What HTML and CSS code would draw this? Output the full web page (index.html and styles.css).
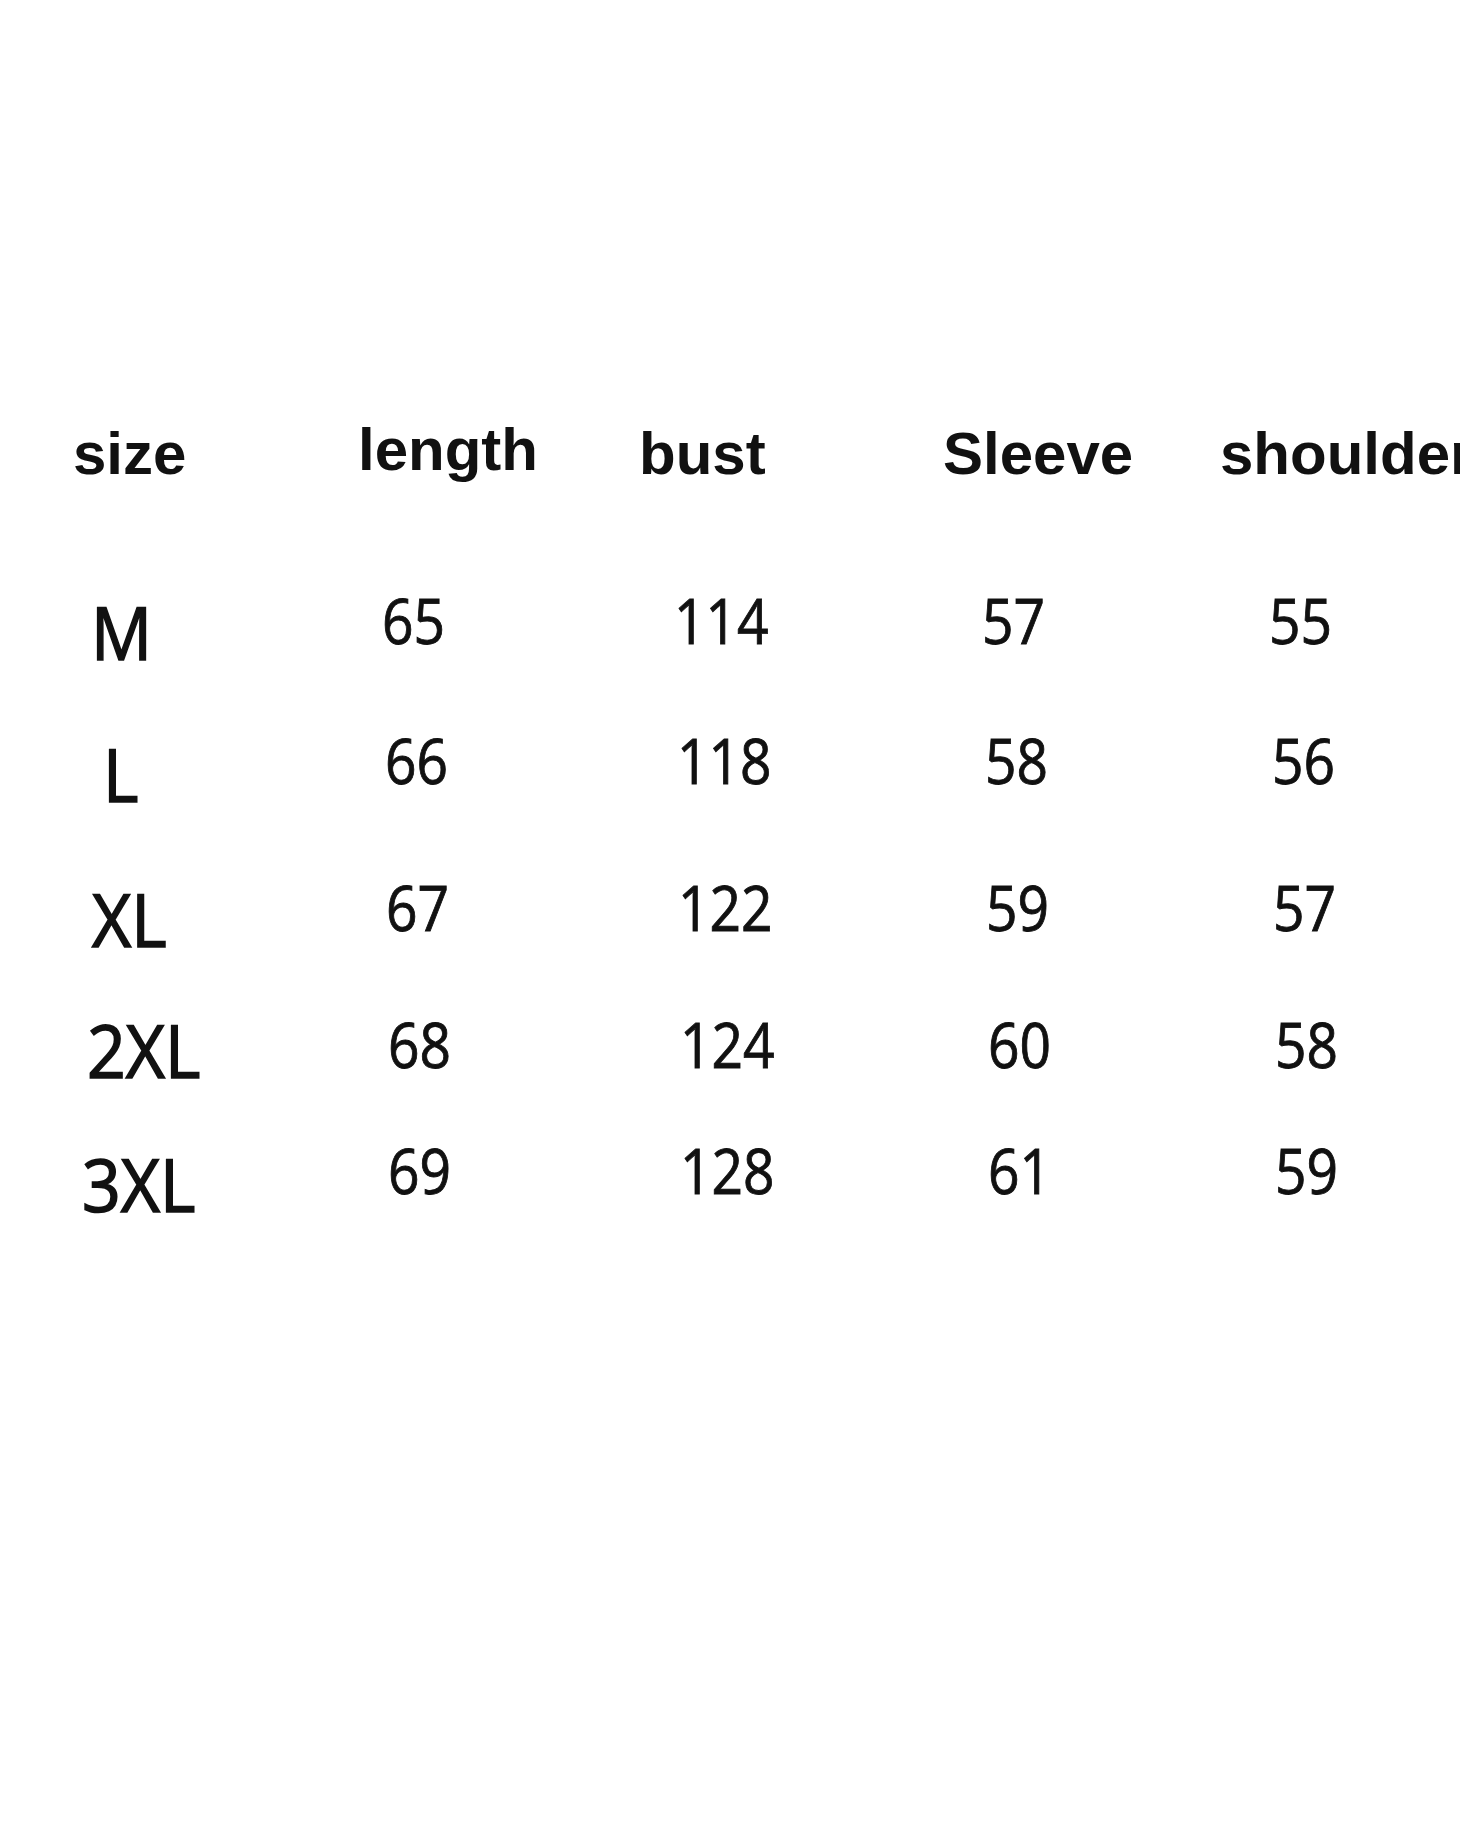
FILE: index.html
```html
<!DOCTYPE html>
<html lang="en">
<head>
<meta charset="utf-8">
<title>Size chart</title>
<link rel="stylesheet" href="styles.css">
</head>
<body>
<div class="chart">
  <div class="row head">
    <div class="cell c-size">size</div>
    <div class="cell c-length">length</div>
    <div class="cell c-bust">bust</div>
    <div class="cell c-sleeve">Sleeve</div>
    <div class="cell c-shoulder">shoulder</div>
  </div>
  <div class="row data r1">
    <div class="cell label"><span>M</span></div>
    <div class="cell num"><span>65</span></div>
    <div class="cell num"><span>114</span></div>
    <div class="cell num"><span>57</span></div>
    <div class="cell num"><span>55</span></div>
  </div>
  <div class="row data r2">
    <div class="cell label"><span>L</span></div>
    <div class="cell num"><span>66</span></div>
    <div class="cell num"><span>118</span></div>
    <div class="cell num"><span>58</span></div>
    <div class="cell num"><span>56</span></div>
  </div>
  <div class="row data r3">
    <div class="cell label"><span>XL</span></div>
    <div class="cell num"><span>67</span></div>
    <div class="cell num"><span>122</span></div>
    <div class="cell num"><span>59</span></div>
    <div class="cell num"><span>57</span></div>
  </div>
  <div class="row data r4">
    <div class="cell label"><span>2XL</span></div>
    <div class="cell num"><span>68</span></div>
    <div class="cell num"><span>124</span></div>
    <div class="cell num"><span>60</span></div>
    <div class="cell num"><span>58</span></div>
  </div>
  <div class="row data r5">
    <div class="cell label"><span>3XL</span></div>
    <div class="cell num"><span>69</span></div>
    <div class="cell num"><span>128</span></div>
    <div class="cell num"><span>61</span></div>
    <div class="cell num"><span>59</span></div>
  </div>
</div>
</body>
</html>
```
FILE: styles.css
```css
html, body {
  margin: 0;
  padding: 0;
  background: #ffffff;
  overflow: hidden;
}

.chart {
  width: 1460px;
  height: 1827px;
  overflow: hidden;
  padding-top: 420px;
  box-sizing: border-box;
  color: #111111;
}

.row {
  display: grid;
  grid-template-columns: 362px 281px 302px 277px 1fr;
  align-items: start;
}

.cell {
  white-space: nowrap;
}

/* header */
.head .cell {
  font-family: "Liberation Sans", Arial, sans-serif;
  font-weight: bold;
  font-size: 60px;
  line-height: 60px;
  padding-top: 4px;
}
.head .c-size { padding-left: 73px; }
.head .c-length { padding-top: 0; margin-left: -4px; }
.head .c-bust { margin-left: -4px; }
.head .c-sleeve { margin-left: -2px; }
.head .c-shoulder { margin-left: -2px; }

/* data rows */
.data { height: 62px; }
.r1 { margin-top: 105px; padding-left: 0; }
.r2 { margin-top: 78px; padding-left: 3px; }
.r3 { margin-top: 85px; padding-left: 4px; }
.r4 { margin-top: 75px; padding-left: 6px; }
.r5 { margin-top: 64px; padding-left: 6px; }

.num {
  font-family: "Open Sans", "Noto Sans", sans-serif;
  font-weight: 400;
  font-size: 62px;
  line-height: 62px;
  -webkit-text-stroke: 0.9px #111111;
}
.num span,
.label span {
  display: inline-block;
  transform-origin: left center;
}
.num span { transform: scaleX(0.89); }

.num:nth-child(2) { padding-left: 20px; }
.num:nth-child(3) { padding-left: 31px; }
.num:nth-child(4) { padding-left: 37px; }
.num:nth-child(5) { padding-left: 47px; }

.label {
  font-family: "Open Sans", "Noto Sans", sans-serif;
  font-weight: 400;
  font-size: 73px;
  line-height: 73px;
  -webkit-text-stroke: 1.6px #111111;
}
.label span { transform: scaleX(0.93); }

.r1 .label { padding-left: 91px; padding-top: 6px; }
.r2 .label { padding-left: 100px; padding-top: 8px; }
.r3 .label { padding-left: 88px; padding-top: 6px; }
.r4 .label { padding-left: 81px; padding-top: 0; }
.r5 .label { padding-left: 76px; padding-top: 8px; }
```
